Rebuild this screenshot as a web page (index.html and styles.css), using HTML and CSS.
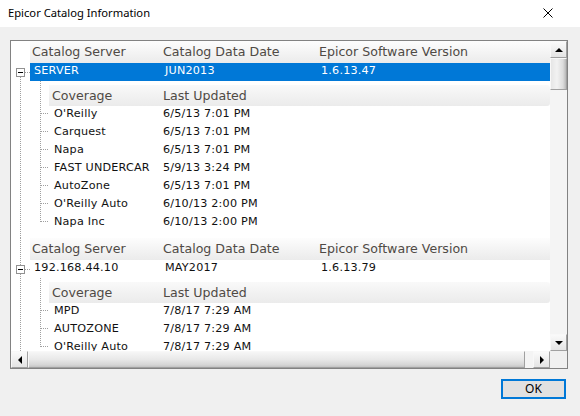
FILE: index.html
```html
<!DOCTYPE html>
<html lang="en">
<head>
    <meta charset="UTF-8">
    <title>Epicor Catalog Information</title>
    <link rel="stylesheet" href="styles.css">
</head>
<body>
    <div class="titlebar">
        <span class="title">Epicor Catalog Information</span>
        <svg class="close" width="10" height="10" viewBox="0 0 10 10">
            <path d="M0.5 0.5 L9.5 9.5 M9.5 0.5 L0.5 9.5" stroke="#000" stroke-width="1" fill="none"/>
        </svg>
    </div>

    <div class="dialog-body">
        <div class="tree">
            <div class="tree-view">
                <div class="node">
                    <div class="node-head">
                        <span>Catalog Server</span>
                        <span>Catalog Data Date</span>
                        <span>Epicor Software Version</span>
                    </div>
                    <div class="node-row selected">
                        <i class="expander"></i>
                        <span>SERVER</span>
                        <span>JUN2013</span>
                        <span>1.6.13.47</span>
                    </div>
                    <div class="children">
                        <div class="child-head">
                            <span>Coverage</span>
                            <span>Last Updated</span>
                        </div>
                        <div class="child-row"><span>O'Reilly</span><span>6/5/13 7:01 PM</span></div>
                        <div class="child-row"><span>Carquest</span><span>6/5/13 7:01 PM</span></div>
                        <div class="child-row"><span>Napa</span><span>6/5/13 7:01 PM</span></div>
                        <div class="child-row"><span>FAST UNDERCAR</span><span>5/9/13 3:24 PM</span></div>
                        <div class="child-row"><span>AutoZone</span><span>6/5/13 7:01 PM</span></div>
                        <div class="child-row"><span>O'Reilly Auto</span><span>6/10/13 2:00 PM</span></div>
                        <div class="child-row"><span>Napa Inc</span><span>6/10/13 2:00 PM</span></div>
                    </div>
                </div>

                <div class="node">
                    <div class="node-head">
                        <span>Catalog Server</span>
                        <span>Catalog Data Date</span>
                        <span>Epicor Software Version</span>
                    </div>
                    <div class="node-row">
                        <i class="expander"></i>
                        <span>192.168.44.10</span>
                        <span>MAY2017</span>
                        <span>1.6.13.79</span>
                    </div>
                    <div class="children">
                        <div class="child-head">
                            <span>Coverage</span>
                            <span>Last Updated</span>
                        </div>
                        <div class="child-row"><span>MPD</span><span>7/8/17 7:29 AM</span></div>
                        <div class="child-row"><span>AUTOZONE</span><span>7/8/17 7:29 AM</span></div>
                        <div class="child-row"><span>O'Reilly Auto</span><span>7/8/17 7:29 AM</span></div>
                    </div>
                </div>
            </div>

            <div class="vscroll">
                <div class="sb-btn"><i class="arrow up"></i></div>
                <div class="sb-thumb-v"></div>
                <div class="sb-track"></div>
                <div class="sb-btn"><i class="arrow down"></i></div>
            </div>

            <div class="hscroll">
                <div class="sb-btn"><i class="arrow left"></i></div>
                <div class="sb-thumb-h"></div>
                <div class="sb-track"></div>
                <div class="sb-btn"><i class="arrow right"></i></div>
            </div>

            <div class="corner"></div>
        </div>

        <div class="actions">
            <button class="ok">OK</button>
        </div>
    </div>
</body>
</html>
```

FILE: styles.css
```css
* {
    margin: 0;
    padding: 0;
    box-sizing: border-box;
}
body {
    background: #f0f0f0;
    font-family: "DejaVu Sans", Verdana, sans-serif;
    color: #000;
    width: 580px;
    height: 416px;
    overflow: hidden;
}
.titlebar {
    height: 27px;
    background: #fff;
    display: flex;
    align-items: center;
    justify-content: space-between;
    padding: 0 27px 2px 8px;
}
.title {
    font-family: "Noto Sans", "Open Sans", sans-serif;
    font-size: 11.2px;
    color: #000;
}
.close {
    display: block;
}
.dialog-body {
    padding: 13px 12px 0 10px;
}

/* tree control */
.tree {
    width: 558px;
    height: 329px;
    border: 1px solid #828282;
    background: #fff;
    display: grid;
    grid-template-columns: 1fr 17px;
    grid-template-rows: 1fr 17px;
}
.tree-view {
    overflow: hidden;
    position: relative;
}
.node {
    position: relative;
    padding-left: 19px;
    padding-bottom: 6px;
}
.node::before {
    content: "";
    position: absolute;
    left: 9px;
    top: 0;
    bottom: 0;
    border-left: 1px dotted #a0a0a0;
}
.node:first-child::before {
    top: 36px;
}
.node-head, .node-row {
    display: grid;
    grid-template-columns: 133px 156px 1fr;
    align-items: center;
}
.node-head {
    height: 22px;
    padding-bottom: 2px;
    background: linear-gradient(#fdfdfd, #ebebeb);
    color: #4f4a45;
    font-size: 12.6px;
}
.node-head span:first-child {
    padding-left: 2px;
}
.node-row {
    position: relative;
    height: 18px;
    padding-bottom: 3px;
    font-size: 11.2px;
    letter-spacing: 0.2px;
    color: #111;
}
.node-row span {
    padding-left: 2px;
}
.node-row span:first-of-type {
    padding-left: 4px;
}
.node-row.selected {
    background: #0078d7;
    color: #fff;
}
.expander {
    position: absolute;
    left: -14px;
    top: 5px;
    width: 9px;
    height: 9px;
    border: 1px solid #919191;
    background: #fff;
    z-index: 1;
}
.expander::before {
    content: "";
    position: absolute;
    left: 1px;
    top: 3px;
    width: 5px;
    height: 1px;
    background: #000;
}
.expander::after {
    content: "";
    position: absolute;
    left: 8px;
    top: 3px;
    width: 5px;
    border-top: 1px dotted #a0a0a0;
}
.children {
    position: relative;
    margin: 4px 0 0 10px;
    padding-left: 9px;
}
.children::before {
    content: "";
    position: absolute;
    left: 0;
    top: -4px;
    bottom: 10px;
    border-left: 1px dotted #a0a0a0;
}
.child-head, .child-row {
    display: grid;
    grid-template-columns: 114px 154px;
    align-items: center;
}
.child-head {
    height: 21px;
    background: linear-gradient(#f9f9f9, #ebebeb);
    border-radius: 0 3px 3px 0;
    color: #4f4a45;
    font-size: 12.6px;
}
.child-head span:first-child {
    padding-left: 3px;
}
.child-row {
    position: relative;
    height: 18px;
    padding-bottom: 4px;
    font-size: 11.2px;
    letter-spacing: 0.2px;
    color: #111;
}
.child-row span:first-child {
    padding-left: 5px;
}
.child-row::before {
    content: "";
    position: absolute;
    left: -8px;
    top: 7px;
    width: 7px;
    border-top: 1px dotted #a0a0a0;
}

/* scrollbars */
.vscroll, .hscroll {
    display: flex;
    background: #f4f4f4;
}
.vscroll {
    flex-direction: column;
}
.sb-btn {
    flex: 0 0 17px;
    height: 17px;
    display: flex;
    align-items: center;
    justify-content: center;
    background: linear-gradient(#fafafa, #e4e4e4);
    border: 1px solid #f8f8f8;
    border-right-color: #a0a0a0;
    border-bottom-color: #a0a0a0;
}
.sb-track {
    flex: 1;
}
.sb-thumb-v {
    flex: 0 0 32px;
    background: linear-gradient(to right, #e6e6e6, #f2f2f2 40%, #dcdcdc 80%, #b8b8b8);
    border: 1px solid #f8f8f8;
    border-right-color: #a0a0a0;
    border-bottom-color: #a0a0a0;
}
.hscroll .sb-thumb-h {
    flex: 0 0 497px;
    background: linear-gradient(#f6f6f6, #e8e8e8 50%, #d6d6d6 85%, #c4c4c4);
    border: 1px solid #f8f8f8;
    border-right-color: #a0a0a0;
    border-bottom-color: #a0a0a0;
}
.arrow {
    width: 0;
    height: 0;
    border: 4px solid transparent;
}
.arrow.up {
    border-bottom-color: #000;
    border-top-width: 0;
}
.arrow.down {
    border-top-color: #000;
    border-bottom-width: 0;
}
.arrow.left {
    border-right-color: #000;
    border-left-width: 0;
}
.arrow.right {
    border-left-color: #000;
    border-right-width: 0;
}
.corner {
    background: #f0f0f0;
}

/* buttons */
.actions {
    display: flex;
    justify-content: flex-end;
    margin-top: 10px;
    padding-right: 2px;
}
.ok {
    width: 65px;
    height: 20px;
    border: 2px solid #0078d7;
    background: #e1e1e1;
    font-family: "Noto Sans", "Open Sans", sans-serif;
    font-size: 12px;
    color: #000;
    line-height: 14px;
}
```
